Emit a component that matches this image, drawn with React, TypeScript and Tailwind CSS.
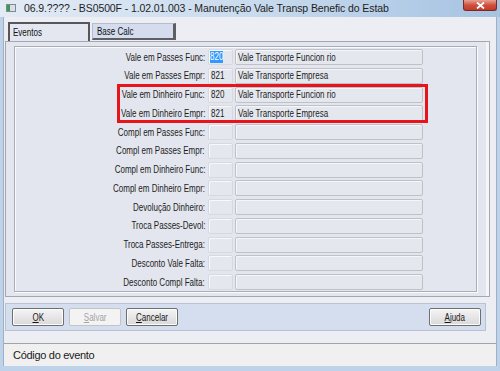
import React from "react";

const ROWS: { label: string; code?: string; desc?: string }[] = [
  { label: "Vale em Passes Func:", code: "820", desc: "Vale Transporte Funcion rio" },
  { label: "Vale em Passes Empr:", code: "821", desc: "Vale Transporte Empresa" },
  { label: "Vale em Dinheiro Func:", code: "820", desc: "Vale Transporte Funcion rio" },
  { label: "Vale em Dinheiro Empr:", code: "821", desc: "Vale Transporte Empresa" },
  { label: "Compl em Passes Func:" },
  { label: "Compl em Passes Empr:" },
  { label: "Compl em Dinheiro Func:" },
  { label: "Compl em Dinheiro Empr:" },
  { label: "Devolução Dinheiro:" },
  { label: "Troca Passes-Devol:" },
  { label: "Troca Passes-Entrega:" },
  { label: "Desconto Vale Falta:" },
  { label: "Desconto Compl Falta:" },
];

const ui = { fontFamily: '"Liberation Sans", Arial, sans-serif' };

// the form font is narrow (Tahoma like), squeeze Liberation Sans a bit
function N({ children, right, className }: { children: React.ReactNode; right?: boolean; className?: string }) {
  return (
    <span
      className={
        "inline-block whitespace-nowrap scale-x-[0.8] " + (right ? "origin-right " : "origin-left ") + (className ?? "")
      }
    >
      {children}
    </span>
  );
}

function Btn({ children, disabled, className }: { children: React.ReactNode; disabled?: boolean; className?: string }) {
  return (
    <div
      className={
        "h-[18px] w-[52px] flex items-center justify-center rounded-[2px] border text-[10px] " +
        (disabled
          ? "border-[#c4c4c4] bg-[#f3f3f3] text-[#a3a3a3]"
          : "border-[#6f6f6f] bg-gradient-to-b from-[#f4f4f4] to-[#d9d9d9] text-[#1a1a1a] shadow-[inset_0_0_0_1px_#fcfcfc]") +
        " " +
        (className ?? "")
      }
    >
      <span className="inline-block whitespace-nowrap scale-x-[0.8]">{children}</span>
    </div>
  );
}

export default function App() {
  return (
    <div className="w-[500px] h-[371px] overflow-hidden flex flex-col bg-[#bed3ea]" style={ui}>
      {/* title bar */}
      <div className="h-[17px] flex items-start bg-gradient-to-r from-[#e3ebf5] via-[#c9dbee] to-[#a6c3e2]">
        <div className="mt-[4px] ml-[6px] w-[10px] h-[8px] border border-[#7b8a99] bg-[#d9dee4] flex">
          <div className="w-[3px] h-full bg-[#3c9a4a]" />
        </div>
        <div className="ml-[8px] mt-[2px] text-[10.5px] leading-[12px] text-[#1e1e1e] tracking-[-0.1px]">
          06.9.???? - BS0500F - 1.02.01.003 - Manutenção Vale Transp Benefic do Estab
        </div>
        <div className="ml-auto mr-[3px] w-[34px] h-[11px] rounded-b-[3px] border border-t-0 border-[#7a2a22] bg-gradient-to-b from-[#e5a193] via-[#cf4f3d] to-[#c23a28] flex items-center justify-center">
          <svg width="9" height="7" viewBox="0 0 9 7">
            <path d="M1 0.5 L8 6.5 M8 0.5 L1 6.5" stroke="#fff" strokeWidth="1.8" />
          </svg>
        </div>
      </div>

      {/* body */}
      <div className="flex-1 mx-[3px] flex flex-col bg-[#eceef3] border-x border-[#9eb0c4]">
        {/* tabs */}
        <div className="h-[24px] pl-[4px] flex items-end">
          <div className="w-[82px] h-[19px] bg-[#e4e7ef] border-2 border-b-0 border-[#55575c] flex items-center pl-[3px] text-[10px] text-[#111]">
            <N>Eventos</N>
          </div>
          <div className="ml-[2px] mb-[1px] w-[84px] h-[17px] bg-[#d4dcee] border border-[#b5bccb] border-r-[3px] border-r-[#5d5f64] border-b-[2px] border-b-[#5d5f64] flex items-center pl-[4px] text-[10px] text-[#111]">
            <N>Base Calc</N>
          </div>
        </div>

        {/* tab panel */}
        <div className="ml-[1px] w-[485px] h-[256px] bg-[#e3e6ee] border border-[#a3a7b0] shadow-[inset_-3px_0_0_#f4f5f8] pl-[8px] pt-[4px]">
          <div className="relative w-[463px] h-[246px] border border-[#a9adb6] shadow-[inset_1px_1px_0_#fafbfc,1px_1px_0_#fafbfc] pt-[2px]">
            {ROWS.map((r, i) => (
              <div key={i} className="h-[18.75px] flex items-start">
                <div className="w-[190px] h-[16px] flex items-center justify-end text-[10px] text-[#1c1c1c]">
                  <N right>{r.label}</N>
                </div>
                <div className="ml-[3px] w-[25px] h-[16px] rounded-[2px] border border-[#d7d9de] bg-[#e5e7ee] shadow-[inset_1px_1px_0_#f8f9fb] flex items-center pl-[1px] text-[10px] text-[#1c1c1c]">
                  {r.code &&
                    (i === 0 ? (
                      <span className="bg-[#3399ff] text-white leading-[12px] w-[13px] overflow-visible">
                        <N>{r.code}</N>
                      </span>
                    ) : (
                      <span className="px-[1px]">
                        <N>{r.code}</N>
                      </span>
                    ))}
                </div>
                <div className="ml-[2px] w-[188px] h-[16px] rounded-[2px] border border-[#bfc1c6] bg-[#e5e7ee] shadow-[inset_1px_1px_0_#f5f6f9] flex items-center pl-[2px] text-[10px] text-[#1c1c1c]">
                  {r.desc && <N>{r.desc}</N>}
                </div>
              </div>
            ))}
            {/* red highlight */}
            <div className="absolute left-[102px] top-[37px] w-[311px] h-[39px] border-[3px] border-[#e8141c]" />
          </div>
        </div>

        {/* button bar */}
        <div className="mt-[6px] ml-[1px] w-[481px] h-[28px] bg-[#d5deef] border border-[#b9c2d2] flex items-center pl-[6px] pr-[4px]">
          <Btn><span className="underline">O</span>K</Btn>
          <Btn disabled className="ml-[5px]"><span className="underline">S</span>alvar</Btn>
          <Btn className="ml-[5px]"><span className="underline">C</span>ancelar</Btn>
          <Btn className="ml-auto"><span className="underline">A</span>juda</Btn>
        </div>

        <div className="flex-1" />

        {/* status bar */}
        <div className="h-[23px] border-t border-[#a2a4a8] bg-[#f0f0f0] flex items-center pl-[9px] text-[11px] text-[#1a1a1a] tracking-[-0.3px]">
          Código do evento
        </div>
      </div>
      <div className="h-[5px]" />
    </div>
  );
}
